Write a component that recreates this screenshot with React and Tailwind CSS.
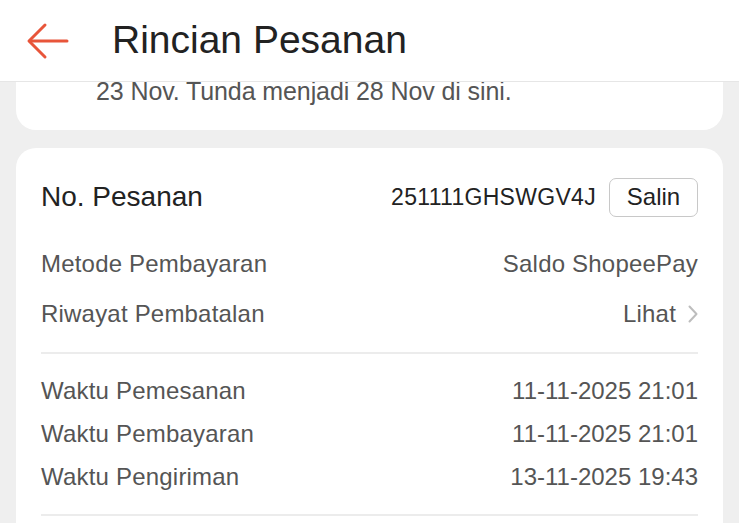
export default function App() {
  const font = { fontFamily: '"Liberation Sans", Arial, sans-serif' };
  return (
    <div className="w-[739px] h-[523px] overflow-hidden bg-[#efefef]" style={font}>
      <div className="h-[82px] bg-white flex items-center border-b border-[#e6e6e6] relative z-10">
        <div className="w-[112px] pl-[26px] flex items-center">
          <svg width="44" height="38" viewBox="0 0 44 38" fill="none" stroke="#e8553a" strokeWidth="3" strokeLinecap="round" strokeLinejoin="round">
            <path d="M41 19H4" />
            <path d="M19 3L3 19L19 35" />
          </svg>
        </div>
        <div className="text-[39px] leading-none text-[#222] -mt-[3px]">Rincian Pesanan</div>
      </div>
      <div className="px-4">
        <div className="h-[48px] bg-white rounded-b-[20px] overflow-hidden">
          <div className="pl-[80px] -mt-[5px] text-[25px] tracking-[-0.1px] leading-[28px] text-[#555]">23 Nov. Tunda menjadi 28 Nov di sini.</div>
        </div>
        <div className="mt-[18px] bg-white rounded-t-[20px] px-[25px] pt-[29px] h-[400px]">
          <div className="flex items-center justify-between h-[40px]">
            <div className="text-[28px] text-[#222]">No. Pesanan</div>
            <div className="flex items-center gap-[13px]">
              <span className="text-[23px] tracking-[0.3px] text-[#222]">251111GHSWGV4J</span>
              <span className="w-[89px] h-[39px] border border-[#c8c8c8] rounded-[7px] flex items-center justify-center text-[24px] text-[#222]">Salin</span>
            </div>
          </div>
          <div className="mt-[31px] flex items-center justify-between h-[32px] text-[24px] tracking-[0.2px] text-[#555]">
            <span>Metode Pembayaran</span>
            <span>Saldo ShopeePay</span>
          </div>
          <div className="mt-[18px] flex items-center justify-between h-[32px] text-[24px] tracking-[0.2px] text-[#555]">
            <span>Riwayat Pembatalan</span>
            <span className="flex items-center gap-[12px]">
              Lihat
              <svg width="10" height="18" viewBox="0 0 10 18" fill="none" stroke="#bdbdbd" strokeWidth="2" strokeLinecap="round" strokeLinejoin="round">
                <path d="M1.5 1.5L8.5 9L1.5 16.5" />
              </svg>
            </span>
          </div>
          <div className="mt-[22px] h-[2px] bg-[#ececec]" />
          <div className="mt-[21px] flex flex-col gap-[11px] text-[24px] text-[#555]">
            <div className="flex items-center justify-between h-[32px]">
              <span className="tracking-[0.2px]">Waktu Pemesanan</span>
              <span>11-11-2025 21:01</span>
            </div>
            <div className="flex items-center justify-between h-[32px]">
              <span className="tracking-[0.2px]">Waktu Pembayaran</span>
              <span>11-11-2025 21:01</span>
            </div>
            <div className="flex items-center justify-between h-[32px]">
              <span className="tracking-[0.2px]">Waktu Pengiriman</span>
              <span>13-11-2025 19:43</span>
            </div>
          </div>
          <div className="mt-[21px] h-[2px] bg-[#ececec]" />
        </div>
      </div>
    </div>
  );
}
